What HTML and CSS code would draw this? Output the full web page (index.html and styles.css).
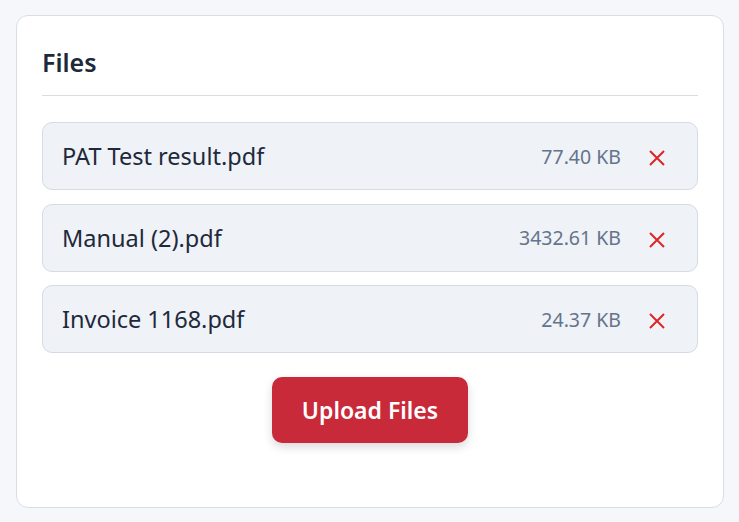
FILE: index.html
```html
<!DOCTYPE html>
<html lang="en">
<head>
  <meta charset="UTF-8" />
  <meta name="viewport" content="width=device-width, initial-scale=1.0"/>
  <title>Files</title>
  <link rel="stylesheet" href="styles.css">
</head>
<body>
  <div class="card">
    <div class="card-title">Files</div>
    <div class="file-list">
      <div class="file-item">
        <span class="file-name">PAT Test result.pdf</span>
        <span class="file-size">77.40 KB</span>
        <button class="remove" aria-label="Remove">
          <svg viewBox="0 0 18 18" width="18" height="18"><path d="M2 2L16 16M16 2L2 16" stroke="#dc2626" stroke-width="2" fill="none"/></svg>
        </button>
      </div>
      <div class="file-item">
        <span class="file-name">Manual (2).pdf</span>
        <span class="file-size">3432.61 KB</span>
        <button class="remove" aria-label="Remove">
          <svg viewBox="0 0 18 18" width="18" height="18"><path d="M2 2L16 16M16 2L2 16" stroke="#dc2626" stroke-width="2" fill="none"/></svg>
        </button>
      </div>
      <div class="file-item">
        <span class="file-name">Invoice 1168.pdf</span>
        <span class="file-size">24.37 KB</span>
        <button class="remove" aria-label="Remove">
          <svg viewBox="0 0 18 18" width="18" height="18"><path d="M2 2L16 16M16 2L2 16" stroke="#dc2626" stroke-width="2" fill="none"/></svg>
        </button>
      </div>
    </div>
    <div class="actions">
      <button class="upload">Upload Files</button>
    </div>
  </div>
</body>
</html>
```

FILE: styles.css
```css
body {
  font-family: "Noto Sans", "Open Sans", sans-serif;
  background-color: #f5f7fa;
  margin: 0;
  padding: 15px 15px 0 16px;
  color: #1e293b;
}
.card {
  width: 656px;
  height: 491px;
  background-color: white;
  border: 1px solid #d9dde5;
  border-radius: 12px;
  padding: 0 25px;
}
.card-title {
  font-size: 25px;
  font-weight: 600;
  padding-top: 30px;
  line-height: 32px;
  padding-bottom: 17px;
  border-bottom: 1px solid #d9dce3;
  color: #1e293b;
}
.file-list {
  display: flex;
  flex-direction: column;
  gap: 13.5px;
  margin-top: 26px;
}
.file-item {
  display: flex;
  align-items: center;
  height: 66px;
  padding: 0 31px 0 19px;
  background-color: #eff2f7;
  border: 1px solid #d5dae3;
  border-radius: 10px;
}
.file-name {
  flex: 1;
  font-size: 23.5px;
  color: #1e293b;
}
.file-size {
  font-size: 19.5px;
  color: #64748b;
}
.remove {
  background: none;
  border: none;
  padding: 0;
  margin-left: 27px;
  width: 18px;
  height: 18px;
  display: flex;
  align-items: center;
  justify-content: center;
  margin-top: 4px;
}
.actions {
  display: flex;
  justify-content: center;
  margin-top: 24px;
}
.upload {
  width: 196px;
  height: 66px;
  font-family: inherit;
  font-size: 23px;
  font-weight: 600;
  color: white;
  background-color: #c92a39;
  border: none;
  border-radius: 10px;
  box-shadow: 0 4px 10px rgba(0, 0, 0, 0.15);
}
```
